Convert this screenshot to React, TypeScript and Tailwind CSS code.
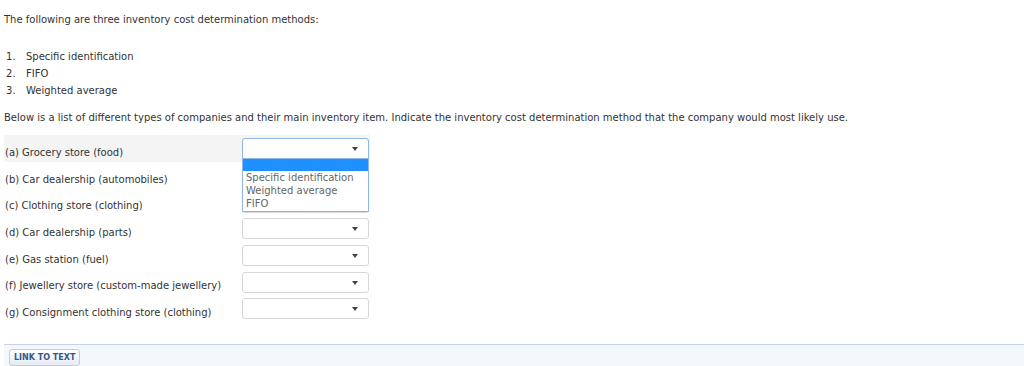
const ROWS = [
  "(a) Grocery store (food)",
  "(b) Car dealership (automobiles)",
  "(c) Clothing store (clothing)",
  "(d) Car dealership (parts)",
  "(e) Gas station (fuel)",
  "(f) Jewellery store (custom-made jewellery)",
  "(g) Consignment clothing store (clothing)",
];

const METHODS = ["Specific identification", "FIFO", "Weighted average"];
const OPTIONS = ["Specific identification", "Weighted average", "FIFO"];

function Caret() {
  return (
    <svg width="6" height="4" viewBox="0 0 6 4" className="absolute right-[11px] top-[9px]">
      <path d="M0 0 H6 L3 4 Z" fill="#444" />
    </svg>
  );
}

function Select({ open }: { open?: boolean }) {
  return (
    <div className="relative h-[21px] w-[127px]">
      <div
        className={
          "h-full w-full rounded-[3px] border bg-white " +
          (open ? "rounded-b-none border-[#8fb4e6]" : "border-[#d7d7d7]")
        }
      />
      <Caret />
      {open && (
        <div className="absolute left-0 top-[20px] z-10 w-[127px] border border-[#8fb4e6] bg-white pb-[1px] text-[10px] leading-[12.7px] text-[#666]">
          <div className="mb-[1px] h-[12px] bg-[#1e90ff]" />
          {OPTIONS.map((o) => (
            <div key={o} className="pl-[3px]">
              {o}
            </div>
          ))}
        </div>
      )}
    </div>
  );
}

export default function App() {
  return (
    <div className="min-h-[366px] bg-white text-[10px] text-[#333] [font-family:'DejaVu_Sans',Verdana,sans-serif]">
      <div className="px-[4px] pt-[13px]">
        <p className="leading-[14px]">The following are three inventory cost determination methods:</p>

        <ol className="mt-[23px] space-y-[3px]">
          {METHODS.map((m, i) => (
            <li key={m} className="flex leading-[14px]">
              <span className="w-[22px] pl-[2px]">{i + 1}.</span>
              <span>{m}</span>
            </li>
          ))}
        </ol>

        <p className="mt-[13px] leading-[14px]">
          Below is a list of different types of companies and their main inventory item. Indicate the inventory cost
          determination method that the company would most likely use.
        </p>

        <div className="mt-[10px] w-[366px]">
          {ROWS.map((r, i) => (
            <div
              key={r}
              className={"flex h-[26.7px] items-center justify-between " + (i === 0 ? "bg-[#f4f4f4]" : "")}
            >
              <span className="pl-[1px] pt-[8px]">{r}</span>
              <div className="pr-[1px] pt-[1px]">
                <Select open={i === 0} />
              </div>
            </div>
          ))}
        </div>
      </div>

      <div className="ml-[4px] mt-[22px] h-[22px] border-t border-[#c8d4e6] bg-[#f3f8fc] pl-[5px] pt-[4px]">
        <button className="h-[17px] rounded-[3px] border border-[#c4ccd8] bg-gradient-to-b from-white to-[#e6ecf3] px-[4px] text-[8px] font-bold leading-[15px] text-[#35578a]">
          LINK TO TEXT
        </button>
      </div>
    </div>
  );
}
